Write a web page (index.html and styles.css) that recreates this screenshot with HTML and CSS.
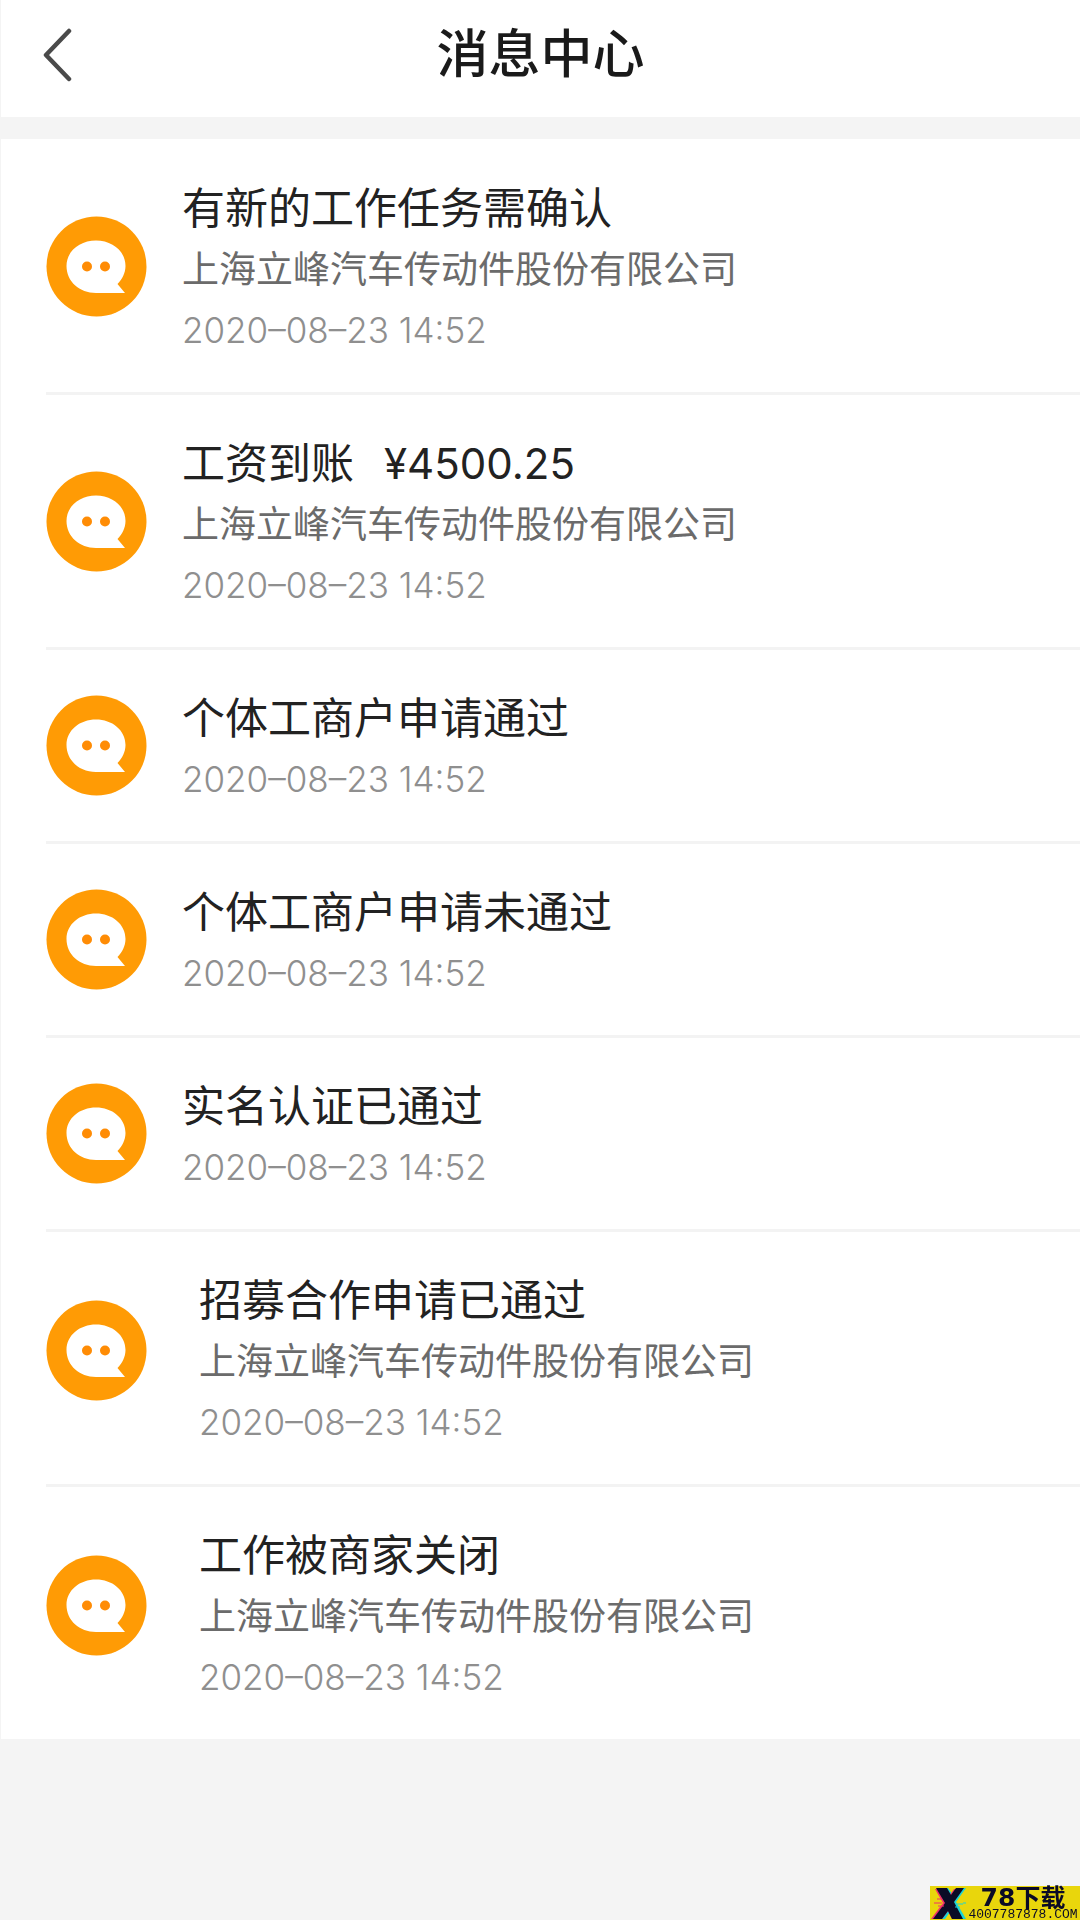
FILE: index.html
```html
<!DOCTYPE html>
<html lang="zh-CN">
<head>
<meta charset="utf-8">
<meta name="viewport" content="width=device-width, initial-scale=1">
<title>消息中心</title>
<link rel="stylesheet" href="styles.css">
</head>
<body>
<svg class="defs" aria-hidden="true">
  <symbol id="chat" viewBox="0 0 101 101">
    <circle cx="50.5" cy="50.5" r="50" fill="#ff9b05"/>
    <path d="M50 24.500C66 24.500 79.500 35 79.500 50C79.500 57 76 63.500 71.500 68L79 77H50C33.500 77 20.500 65.500 20.500 50C20.500 35 34 24.500 50 24.500Z" fill="#fff"/>
    <circle cx="41" cy="50.500" r="5" fill="#ff8c05"/>
    <circle cx="59" cy="50.500" r="5" fill="#ff8c05"/>
  </symbol>
</svg>
<div class="page">
  <header class="header">
    <button class="back" type="button" aria-label="返回">
      <svg width="30" height="56" viewBox="0 0 30 56"><path d="M26 4L3 28L26 52" fill="none" stroke="#4a4a4a" stroke-width="4.500" stroke-linecap="round" stroke-linejoin="round"/></svg>
    </button>
    <h1 class="heading">消息中心</h1>
  </header>
  <main>
    <ul class="list">
      <li class="item">
        <svg class="icon" aria-hidden="true"><use href="#chat"/></svg>
        <div class="text">
          <h2 class="title">有新的工作任务需确认</h2>
          <p class="company">上海立峰汽车传动件股份有限公司</p>
          <time class="date">2020–08–23 14:52</time>
        </div>
      </li>
      <li class="item">
        <svg class="icon" aria-hidden="true"><use href="#chat"/></svg>
        <div class="text">
          <h2 class="title">工资到账<span class="amount">¥4500.25</span></h2>
          <p class="company">上海立峰汽车传动件股份有限公司</p>
          <time class="date">2020–08–23 14:52</time>
        </div>
      </li>
      <li class="item">
        <svg class="icon" aria-hidden="true"><use href="#chat"/></svg>
        <div class="text">
          <h2 class="title">个体工商户申请通过</h2>
          <time class="date">2020–08–23 14:52</time>
        </div>
      </li>
      <li class="item">
        <svg class="icon" aria-hidden="true"><use href="#chat"/></svg>
        <div class="text">
          <h2 class="title">个体工商户申请未通过</h2>
          <time class="date">2020–08–23 14:52</time>
        </div>
      </li>
      <li class="item">
        <svg class="icon" aria-hidden="true"><use href="#chat"/></svg>
        <div class="text">
          <h2 class="title">实名认证已通过</h2>
          <time class="date">2020–08–23 14:52</time>
        </div>
      </li>
      <li class="item item-wide">
        <svg class="icon" aria-hidden="true"><use href="#chat"/></svg>
        <div class="text">
          <h2 class="title">招募合作申请已通过</h2>
          <p class="company">上海立峰汽车传动件股份有限公司</p>
          <time class="date">2020–08–23 14:52</time>
        </div>
      </li>
      <li class="item item-wide">
        <svg class="icon" aria-hidden="true"><use href="#chat"/></svg>
        <div class="text">
          <h2 class="title">工作被商家关闭</h2>
          <p class="company">上海立峰汽车传动件股份有限公司</p>
          <time class="date">2020–08–23 14:52</time>
        </div>
      </li>
    </ul>
  </main>
</div>
<aside class="badge">
  <svg class="badge-logo" width="36" height="34" viewBox="0 0 36 34" aria-hidden="true">
    <path d="M9 2h9l5 7 4-7h9L26 16l10 17H24l-4-7-5 7H5l12-16z" fill="#19d3d8"/>
    <path d="M5 3h9l5 7 5-7h7L22 17l10 16H22l-4-8-6 8H1l12-16z" fill="#f0306a"/>
    <path d="M6 2h11l4 7 5-7h8L24 16l9 17H22l-4-8-6 8H3l12-16z" fill="#0b0b26"/>
    <path d="M4 17h8M8 20h6M7 13h5" stroke="#f0306a" stroke-width="1"/>
    <path d="M26 18h7M25 21h5M33 17h3" stroke="#19d3d8" stroke-width="1"/>
  </svg>
  <div class="badge-text">
    <span class="badge-name"><span class="badge-number">78</span>下载</span>
    <span class="badge-site">4007787878.COM</span>
  </div>
</aside>
</body>
</html>
```
FILE: styles.css
```css
* {
  box-sizing: border-box;
}

body {
  margin: 0;
  min-height: 100vh;
  background: #f4f4f4;
  font-family: Inter, "Noto Sans CJK SC", sans-serif;
}

h1, h2, p, ul {
  margin: 0;
  padding: 0;
  font-weight: 400;
}

.defs {
  display: block;
  width: 0;
  height: 0;
}

.page {
  padding-left: 1px;
}

.header {
  display: grid;
  grid-template-columns: 1fr auto 1fr;
  align-items: center;
  height: 117px;
  padding: 0 42px 8px;
  background: #fff;
}

.back {
  display: flex;
  justify-self: start;
  padding: 0;
  border: 0;
  background: none;
}

.heading {
  color: #1a1a1a;
  font-size: 52px;
  font-weight: 500;
  line-height: 60px;
}

.list {
  margin-top: 22px;
  padding-top: 1px;
  background: #fff;
  list-style: none;
}

.item {
  display: flex;
  align-items: center;
  gap: 35px;
  margin-left: 45px;
  padding: 38px 0 31px;
  border-bottom: 3px solid #f3f3f3;
}

.item:last-child {
  border-bottom: 0;
}

.icon {
  flex: none;
  width: 101px;
  height: 101px;
  margin-bottom: 7px;
}

.item-wide {
  gap: 52px;
}

.item-wide .icon {
  margin-bottom: 23px;
}

.title {
  color: #222;
  font-size: 43px;
  line-height: 61px;
}

.amount {
  margin-left: 30px;
  font-size: 42px;
}

.company {
  color: #6b6b6b;
  font-size: 37px;
  line-height: 61px;
}

.date {
  display: block;
  color: #8f8f8f;
  font-size: 35px;
  font-weight: 300;
  line-height: 61px;
}

.badge {
  position: fixed;
  right: 0;
  bottom: 0;
  display: flex;
  width: 150px;
  height: 34px;
  background: #e9d60c;
  color: #0b0b26;
}

.badge-logo {
  flex: none;
}

.badge-text {
  display: flex;
  flex: 1;
  flex-direction: column;
  align-items: center;
  justify-content: space-between;
}

.badge-name {
  display: flex;
  font-family: "Noto Sans CJK SC", sans-serif;
  font-size: 25px;
  font-weight: 700;
  line-height: 20px;
}

.badge-number {
  font-family: "DejaVu Sans", sans-serif;
  line-height: 24px;
}

.badge-site {
  font-family: "Liberation Mono", monospace;
  font-size: 13px;
  line-height: 10px;
}
```
